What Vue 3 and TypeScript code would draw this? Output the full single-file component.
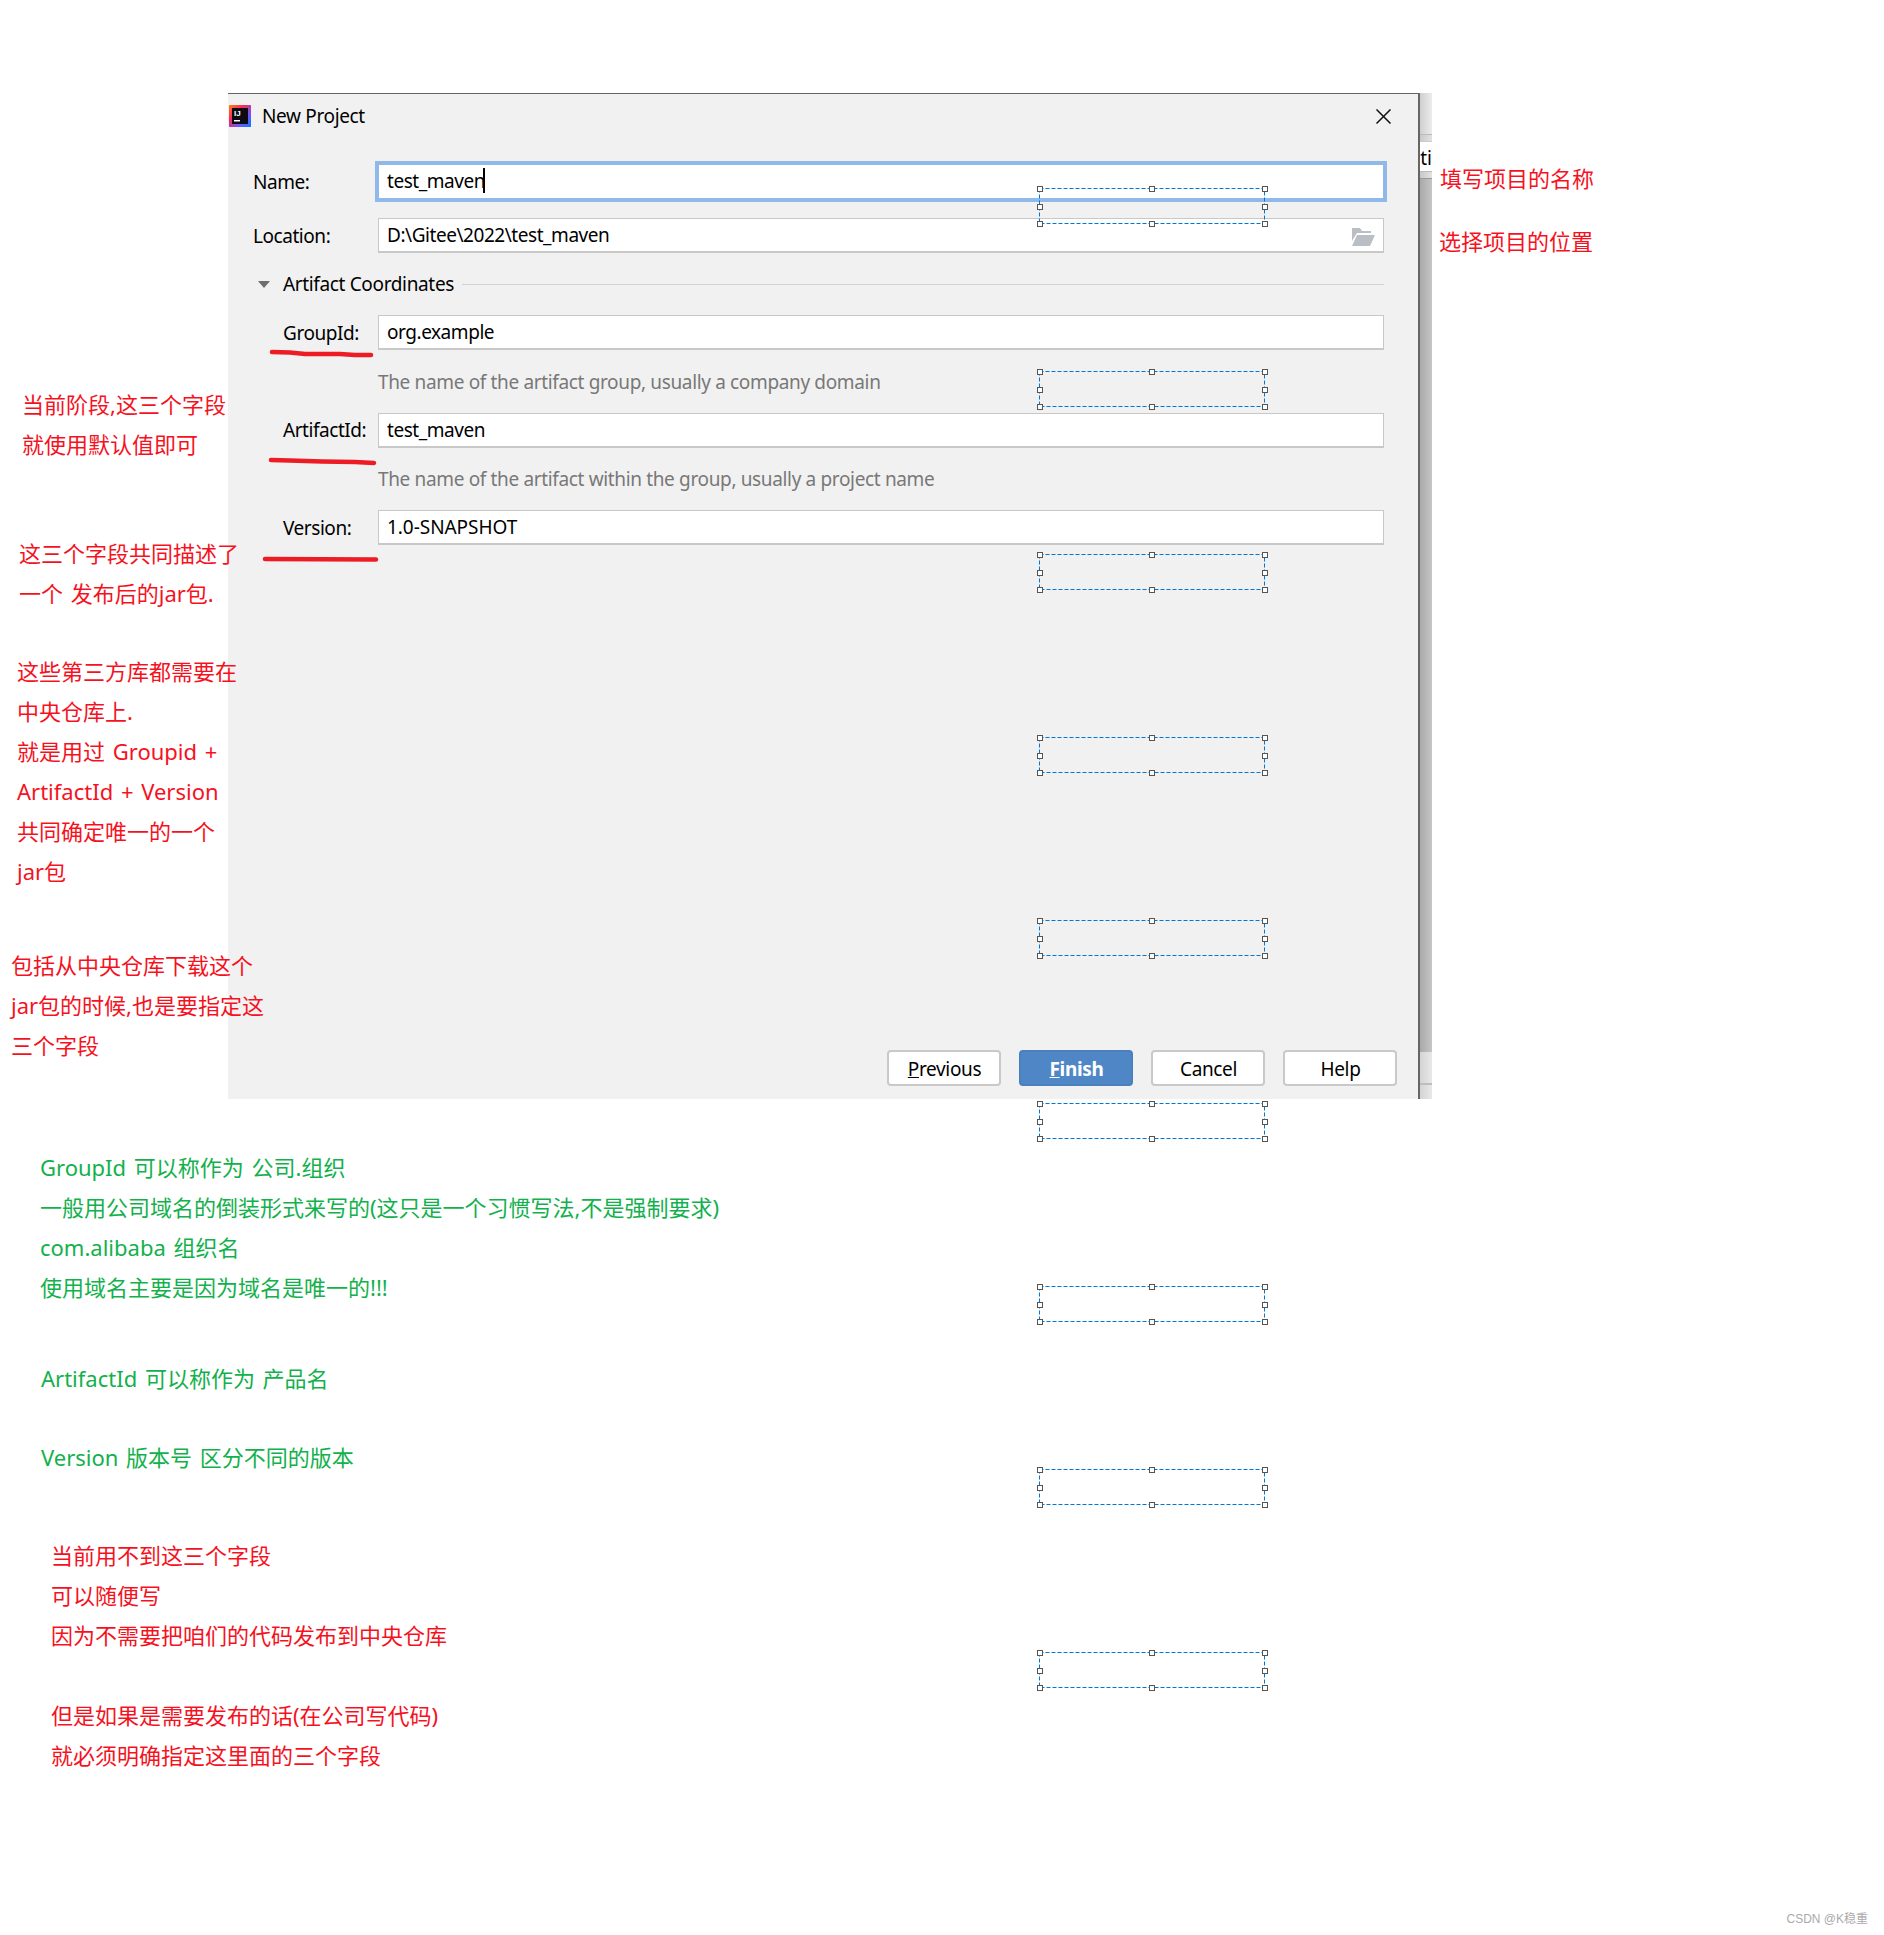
<script setup lang="ts">
interface Note { x: number; y: number; color: 'red' | 'green'; lines: string[] }

const notes: Note[] = [
  { x: 1440, y: 158, color: 'red', lines: ['填写项目的名称'] },
  { x: 1439, y: 221, color: 'red', lines: ['选择项目的位置'] },
  { x: 22, y: 384, color: 'red', lines: ['当前阶段,这三个字段', '就使用默认值即可'] },
  { x: 19, y: 533, color: 'red', lines: ['这三个字段共同描述了', '一个 发布后的jar包.'] },
  { x: 17, y: 651, color: 'red', lines: ['这些第三方库都需要在', '中央仓库上.', '就是用过 Groupid +', 'ArtifactId + Version', '共同确定唯一的一个', 'jar包'] },
  { x: 11, y: 945, color: 'red', lines: ['包括从中央仓库下载这个', 'jar包的时候,也是要指定这', '三个字段'] },
  { x: 40, y: 1147, color: 'green', lines: ['GroupId 可以称作为 公司.组织', '一般用公司域名的倒装形式来写的(这只是一个习惯写法,不是强制要求)', 'com.alibaba 组织名', '使用域名主要是因为域名是唯一的!!!'] },
  { x: 41, y: 1358, color: 'green', lines: ['ArtifactId 可以称作为 产品名'] },
  { x: 41, y: 1437, color: 'green', lines: ['Version 版本号 区分不同的版本'] },
  { x: 51, y: 1535, color: 'red', lines: ['当前用不到这三个字段', '可以随便写', '因为不需要把咱们的代码发布到中央仓库', '\u00a0', '但是如果是需要发布的话(在公司写代码)', '就必须明确指定这里面的三个字段'] },
]

const selectionTops: number[] = [188, 371, 554, 737, 920, 1103, 1286, 1469, 1652]
const handles: string[] = ['tl', 'tc', 'tr', 'ml', 'mr', 'bl', 'bc', 'br']
</script>

<template>
  <div class="page">
    <div class="window">
      <section class="dialog">
        <header class="title-bar">
          <svg class="app-icon" width="22" height="22" viewBox="0 0 22 22">
            <defs>
              <linearGradient id="ij" x1="0" y1="0" x2="1" y2="1">
                <stop offset="0" stop-color="#fc801d" />
                <stop offset="0.35" stop-color="#fe2857" />
                <stop offset="0.7" stop-color="#6b57ff" />
                <stop offset="1" stop-color="#087cfa" />
              </linearGradient>
            </defs>
            <rect width="22" height="22" fill="url(#ij)" />
            <rect x="3" y="3" width="16" height="16" fill="#0c0a14" />
            <text x="5" y="11" class="ij-text">IJ</text>
            <rect x="5" y="15" width="6" height="1.5" fill="#fff" />
          </svg>
          <span class="title">New Project</span>
          <svg class="close" width="15" height="15" viewBox="0 0 15 15">
            <path d="M0.5 0.5 L14.5 14.5 M14.5 0.5 L0.5 14.5" stroke="#111" stroke-width="1.5" fill="none" />
          </svg>
        </header>

        <div class="form">
          <div class="row">
            <label class="label">Name:</label>
            <div class="input focused">test_maven<i class="caret"></i></div>
          </div>
          <div class="row location">
            <label class="label">Location:</label>
            <div class="input">
              D:\Gitee\2022\test_maven
              <svg class="folder" width="23" height="18" viewBox="0 0 23 18">
                <path d="M0 0 H8 L10 3 H19 V5 H5 L0 13 Z" fill="#b9bfc4" />
                <path d="M5 7 H23 L18 18 H0 Z" fill="#b9bfc4" />
              </svg>
            </div>
          </div>

          <div class="section-head">
            <span class="triangle"></span>
            <span>Artifact Coordinates</span>
            <span class="rule"></span>
          </div>

          <div class="row nested">
            <label class="label">GroupId:</label>
            <div class="input">org.example</div>
          </div>
          <p class="hint">The name of the artifact group, usually a company domain</p>
          <div class="row nested">
            <label class="label">ArtifactId:</label>
            <div class="input">test_maven</div>
          </div>
          <p class="hint">The name of the artifact within the group, usually a project name</p>
          <div class="row nested">
            <label class="label">Version:</label>
            <div class="input wide">1.0-SNAPSHOT</div>
          </div>
        </div>

        <footer class="buttons">
          <button class="btn"><u>P</u>revious</button>
          <button class="btn primary"><u>F</u>inish</button>
          <button class="btn">Cancel</button>
          <button class="btn">Help</button>
        </footer>
      </section>

      <aside class="sliver">
        <div class="sl-top"></div>
        <div class="sl-gap"></div>
        <div class="sl-white"><span>ati</span></div>
        <div class="sl-gap"></div>
        <div class="sl-dark"></div>
        <div class="sl-bottom"></div>
        <div class="sl-foot"></div>
      </aside>
    </div>

    <div
      v-for="top in selectionTops"
      :key="top"
      class="selection"
      :style="{ top: top + 'px' }"
    >
      <svg class="dash" width="226" height="36" viewBox="0 0 226 36">
        <rect x="0.5" y="0.5" width="225" height="35" />
      </svg>
      <i v-for="h in handles" :key="h" class="handle" :class="h"></i>
    </div>

    <svg class="strokes" width="400" height="600" viewBox="0 0 400 600">
      <path d="M272 352 L290 352.5 L305 354 L340 354 L355 355 L371 355" />
      <path d="M271 460 L290 460.5 L322 461.5 L355 462 L374 463" />
      <path d="M265 559 L376 559.5" />
    </svg>

    <div
      v-for="(note, i) in notes"
      :key="i"
      class="note"
      :class="note.color"
      :style="{ left: note.x + 'px', top: note.y + 'px' }"
    >
      <div v-for="(line, j) in note.lines" :key="j">{{ line }}</div>
    </div>

    <div class="watermark">CSDN @K稳重</div>
  </div>
</template>

<style scoped>
.page {
  position: relative;
  width: 1884px;
  height: 1935px;
  background: #fff;
  overflow: hidden;
  font-family: "Noto Sans", "Noto Sans CJK SC", sans-serif;
}

.window {
  display: flex;
  width: 1204px;
  height: 1006px;
  margin-left: 228px;
  position: relative;
  top: 93px;
}

.dialog {
  box-sizing: border-box;
  flex: none;
  width: 1192px;
  height: 1006px;
  background: #f1f1f1;
  border-top: 1px solid #666;
  border-right: 2px solid #666;
  display: flex;
  flex-direction: column;
  color: #000;
  font-size: 19px;
  letter-spacing: -0.35px;
}

.title-bar {
  display: flex;
  align-items: center;
  height: 44px;
  flex: none;
  padding: 0 27px 0 1px;
}

.title {
  margin-left: 11px;
  flex: 1;
}

.ij-text {
  font-family: "Liberation Sans", sans-serif;
  font-size: 8px;
  font-weight: 700;
  fill: #fff;
  letter-spacing: 0;
}

.form {
  padding: 26px 34px 0 25px;
  display: flex;
  flex-direction: column;
}

.row {
  display: flex;
  align-items: center;
  height: 35px;
  letter-spacing: -0.45px;
}

.location {
  margin-top: 19px;
}

.label {
  width: 125px;
  flex: none;
}

.nested {
  padding-left: 30px;
}

.nested .label {
  width: 95px;
}

.input {
  position: relative;
  flex: 1;
  box-sizing: border-box;
  height: 35px;
  background: #fff;
  border: 1px solid #c8c8c8;
  border-bottom-width: 2px;
  padding-left: 8px;
  display: flex;
  align-items: center;
}

.wide {
  letter-spacing: -0.05px;
}

.focused {
  border: 1px solid #8fb9e8;
  box-shadow: 0 0 0 3px #8fb9e8;
  padding-bottom: 2px;
}

.caret {
  display: inline-block;
  width: 2px;
  height: 25px;
  background: #000;
  margin-left: -2px;
}

.folder {
  position: absolute;
  right: 8px;
  top: 9px;
}

.section-head {
  display: flex;
  align-items: center;
  height: 62px;
}

.triangle {
  width: 0;
  height: 0;
  margin: 0 13px 0 5px;
  border-left: 6.5px solid transparent;
  border-right: 6.5px solid transparent;
  border-top: 7px solid #6e6e6e;
}

.rule {
  flex: 1;
  height: 1px;
  margin-left: 8px;
  background: #d2d2d2;
}

.hint {
  margin: 0;
  box-sizing: border-box;
  height: 62.5px;
  display: flex;
  align-items: center;
  padding: 1px 0 0 125px;
  color: #787878;
}

.buttons {
  margin-top: auto;
  padding: 0 21px 13px 0;
  display: flex;
  justify-content: flex-end;
  gap: 18px;
}

.btn {
  width: 114px;
  height: 36px;
  box-sizing: border-box;
  background: #fff;
  border: 2px solid #c9c9c9;
  border-radius: 4px;
  font: inherit;
  letter-spacing: inherit;
  color: #000;
  padding: 2px 0 0 1px;
}

.primary {
  background: #4f87c6;
  border-color: #4a80bd;
  color: #fff;
  font-weight: 700;
}

.sliver {
  flex: 1;
  min-width: 0;
  overflow: hidden;
  display: flex;
  flex-direction: column;
}

.sl-top {
  height: 41px;
  background: linear-gradient(90deg, #cfcfcf, #ececec);
}

.sl-gap {
  height: 7px;
  background: linear-gradient(90deg, #c8c8c8, #e2e2e2);
  border-top: 1px solid #bbb;
  box-sizing: border-box;
}

.sl-white {
  height: 30px;
  background: #fff;
  overflow: hidden;
  display: flex;
  justify-content: flex-end;
  align-items: center;
  padding-top: 2px;
  font-size: 19px;
  color: #000;
  border-top: 1px solid #ccc;
  box-sizing: border-box;
}

.sl-dark {
  flex: 1;
  background: linear-gradient(90deg, #a9a9a9, #c6c6c6);
  border-top: 1px solid #999;
}

.sl-bottom {
  height: 31px;
  background: linear-gradient(90deg, #d4d4d4, #e8e8e8);
}

.sl-foot {
  height: 16px;
  background: linear-gradient(90deg, #d4d4d4, #e8e8e8);
  border-top: 2px solid #bdbdbd;
  box-sizing: border-box;
}

.selection {
  position: absolute;
  left: 1039px;
  width: 226px;
  height: 36px;
}

.dash {
  display: block;
  fill: none;
  stroke: #0078d7;
  stroke-width: 1;
  stroke-dasharray: 4 2;
}

.handle {
  position: absolute;
  box-sizing: border-box;
  width: 6px;
  height: 6px;
  background: #fff;
  border: 1px solid #555;
}

.tl { left: -2px; top: -2px; }
.tc { left: 110px; top: -2px; }
.tr { right: -3px; top: -2px; }
.ml { left: -2px; top: 16px; }
.mr { right: -3px; top: 16px; }
.bl { left: -2px; bottom: -3px; }
.bc { left: 110px; bottom: -3px; }
.br { right: -3px; bottom: -3px; }

.strokes {
  position: absolute;
  left: 0;
  top: 0;
  fill: none;
  stroke: #ed1c24;
  stroke-width: 4.5;
  stroke-linecap: round;
}

.note {
  position: absolute;
  font-size: 22px;
  line-height: 40px;
  white-space: nowrap;
  word-spacing: 2px;
}

.red {
  color: #f5121e;
}

.green {
  color: #12b14c;
}

.watermark {
  position: absolute;
  right: 16px;
  top: 1912px;
  font-family: "Liberation Sans", "Noto Sans CJK SC", sans-serif;
  font-size: 12px;
  line-height: 14px;
  color: #aaa;
}
</style>
